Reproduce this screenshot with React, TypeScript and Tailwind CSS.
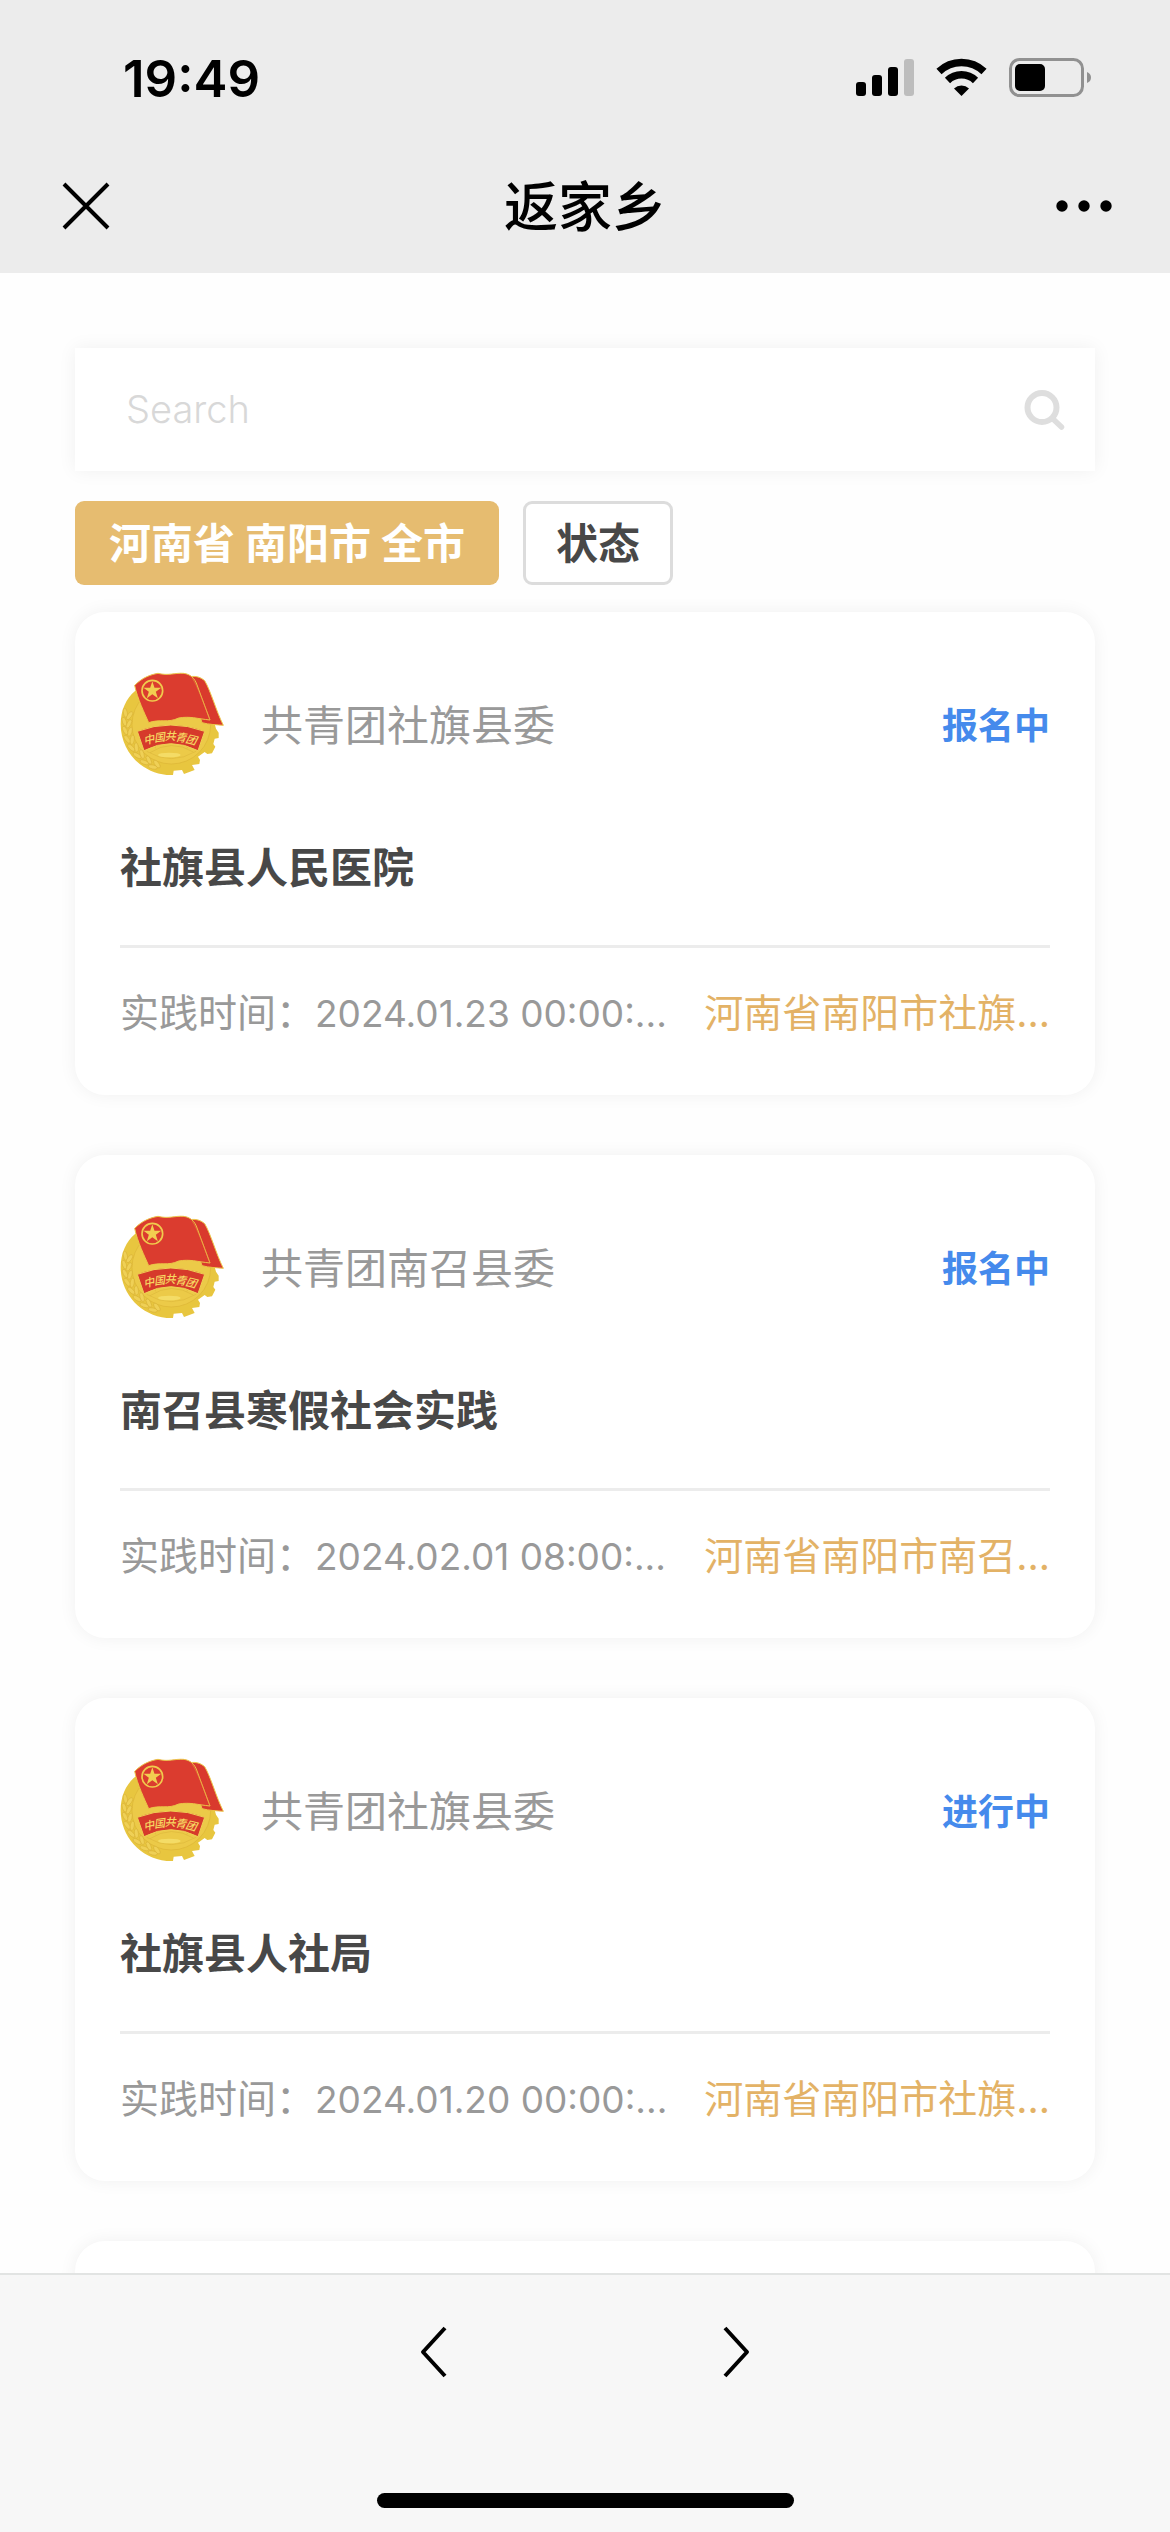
import { useState } from 'react'

interface Activity {
  org: string
  title: string
  status: string
  time: string
  place: string
}

const activities: Activity[] = [
  {
    org: '共青团社旗县委',
    title: '社旗县人民医院',
    status: '报名中',
    time: '2024.01.23 00:00:...',
    place: '河南省南阳市社旗...'
  },
  {
    org: '共青团南召县委',
    title: '南召县寒假社会实践',
    status: '报名中',
    time: '2024.02.01 08:00:...',
    place: '河南省南阳市南召...'
  },
  {
    org: '共青团社旗县委',
    title: '社旗县人社局',
    status: '进行中',
    time: '2024.01.20 00:00:...',
    place: '河南省南阳市社旗...'
  }
]

// characters on the ribbon, each with its own spot and tilt
const ribbonChars = [
  { char: '中', x: 146, y: 268, angle: -14 },
  { char: '国', x: 178, y: 261, angle: -7 },
  { char: '共', x: 211, y: 258, angle: 0 },
  { char: '青', x: 243, y: 261, angle: 7 },
  { char: '团', x: 275, y: 268, angle: 14 }
]

const grains = [
  { x: 79, y: 190, angle: 8 },
  { x: 76, y: 216, angle: 0 },
  { x: 78, y: 242, angle: -10 },
  { x: 84, y: 268, angle: -20 },
  { x: 96, y: 293, angle: -30 },
  { x: 113, y: 316, angle: -42 },
  { x: 134, y: 336, angle: -52 },
  { x: 159, y: 350, angle: -62 }
]

function Emblem() {
  return (
    <svg viewBox="60 68 312 312" className="h-[104px] w-[104px] shrink-0" aria-hidden="true">
      <path
        d="M106 124C78 146 62 184 62 224C62 304 120 368 200 377L219 377L221 364L246 362L252 374L284 362L276 347L298 344L300 332L294 322L314 308L322 314L336 312L346 292L340 284L344 268L356 266L356 250L348 238L344 224L300 130Z"
        fill="#e8c63f"
      />
      <circle cx="214" cy="226" r="118" fill="#ecca48" />
      <circle cx="214" cy="226" r="118" fill="none" stroke="#ddb537" strokeWidth="2" />
      {grains.map((g, i) => (
        <g key={i} transform={`translate(${g.x} ${g.y}) rotate(${g.angle})`} fill="#efd056" stroke="#d4ab31" strokeWidth="1.5">
          <ellipse cx="-3" cy="0" rx="6" ry="14" transform="rotate(-18)" />
          <ellipse cx="13" cy="2" rx="6" ry="14" transform="rotate(26)" />
        </g>
      ))}
      <g stroke="#d9b239" strokeWidth="1.5" fill="none">
        <path d="M150 310Q214 268 280 308" />
        <path d="M214 284V236M190 288L178 250M238 288L250 250M168 298L150 268M260 298L280 268" />
        <path d="M140 306Q214 350 288 306" />
      </g>
      <ellipse cx="208" cy="317" rx="34" ry="7" fill="#f4dc66" />
      <path
        d="M262 84C284 78 300 82 314 94C332 124 348 184 370 228C350 226 328 226 306 220Z"
        fill="#d93a2d"
        stroke="#ecc648"
        strokeWidth="3"
      />
      <path
        d="M104 108C128 84 152 76 174 72C204 80 226 70 250 72C272 74 284 88 290 104L330 212C290 208 270 200 236 206C204 222 180 208 146 220C134 192 112 148 104 108Z"
        fill="#db3c2f"
        stroke="#ecc648"
        strokeWidth="3"
        strokeLinejoin="round"
      />
      <path d="M276 86C292 108 312 164 330 212" fill="none" stroke="#e8913c" strokeWidth="1.5" />
      <circle cx="157" cy="124" r="31" fill="none" stroke="#f0cb4d" strokeWidth="5" />
      <path
        d="M157 96L163.500 115.100L183.600 115.300L167.500 127.400L173.500 146.700L157 135L140.500 146.700L146.500 127.400L130.400 115.300L150.500 115.100Z"
        fill="#f2ce50"
      />
      <path d="M112 246Q212 208 314 246L294 304Q212 262 132 304Z" fill="#d63a2b" stroke="#efcf55" strokeWidth="3" />
      {ribbonChars.map((c) => (
        <text
          key={c.char}
          transform={`translate(${c.x} ${c.y}) rotate(${c.angle})`}
          textAnchor="middle"
          dominantBaseline="central"
          fill="#f6d862"
          className="font-['Noto_Sans_CJK_SC',sans-serif] text-[33px] font-medium italic"
        >
          {c.char}
        </text>
      ))}
    </svg>
  )
}

function StatusBar() {
  return (
    <div className="flex h-[156px] items-center justify-between pr-[78px] pl-[123px]">
      <span className="font-['Inter',sans-serif] text-[51px] leading-none font-semibold">19:49</span>
      <svg viewBox="0 0 236 40" className="h-[40px] w-[236px]" aria-hidden="true">
        <rect x="0" y="24" width="10" height="14" rx="3" />
        <rect x="16" y="17" width="10" height="21" rx="3" />
        <rect x="32" y="9" width="10" height="29" rx="3" />
        <rect x="48" y="1" width="10" height="37" rx="3" fill="#bdbdbd" />
        <g fill="none" stroke="#000" strokeWidth="7.4">
          <path d="M83 13.5A32.5 32.5 0 0 1 128 13.5" />
          <path d="M91.500 22.500A20 20 0 0 1 119.500 22.500" />
        </g>
        <path d="M105.500 38L98 30.500A11 11 0 0 1 113 30.500Z" />
        <rect x="154.500" y="1.500" width="72" height="36" rx="9" fill="none" stroke="#919191" strokeWidth="3" />
        <rect x="159" y="6" width="30" height="27" rx="5" />
        <path d="M231 14Q235 15.500 235 19.500T231 25Z" fill="#919191" />
      </svg>
    </div>
  )
}

function NavBar() {
  return (
    <div className="flex h-[117px] items-start justify-between px-[50px] pt-[20px]">
      <button type="button" aria-label="关闭" className="flex h-[60px] w-[72px] items-center justify-center">
        <svg viewBox="0 0 48 48" className="h-[48px] w-[48px]" fill="none" stroke="#000" strokeWidth="4">
          <path d="M2 2L46 46M46 2L2 46" />
        </svg>
      </button>
      <h1 className="text-[54px] leading-[64px] font-medium">返家乡</h1>
      <button type="button" aria-label="更多" className="flex h-[60px] w-[72px] items-center justify-center">
        <svg viewBox="0 0 56 12" className="h-[12px] w-[56px]">
          <circle cx="6" cy="6" r="5.700" />
          <circle cx="28" cy="6" r="5.700" />
          <circle cx="50" cy="6" r="5.700" />
        </svg>
      </button>
    </div>
  )
}

function ActivityCard({ activity }: { activity: Activity }) {
  return (
    <article className="rounded-[30px] bg-white px-[45px] pt-[60px] pb-[52px] shadow-[0_0_18px_rgba(0,0,0,0.06)]">
      <div className="flex items-center">
        <Emblem />
        <span className="ml-[37px] flex-1 pt-[4px] text-[42px] leading-[60px] text-[#999]">{activity.org}</span>
        <span className="pt-[4px] text-[36px] leading-[60px] font-bold text-[#458aec]">{activity.status}</span>
      </div>
      <h2 className="mt-[62px] text-[42px] leading-[60px] font-bold text-[#484848]">{activity.title}</h2>
      <div className="mt-[47px] flex items-center justify-between border-t-3 border-[#ececec] pt-[35px] text-[39px] leading-[60px]">
        <p className="whitespace-nowrap text-[#999]">
          实践时间：<span className="font-['Inter',sans-serif] text-[37px] leading-none">{activity.time}</span>
        </p>
        <p className="whitespace-nowrap text-[#e3b266]">{activity.place}</p>
      </div>
    </article>
  )
}

export default function App() {
  const [keyword, setKeyword] = useState('')

  return (
    <div className="flex h-screen flex-col bg-[#fefefe] font-['Inter','Noto_Sans_CJK_SC',sans-serif] text-black">
      <header className="shrink-0 bg-[#ececec]">
        <StatusBar />
        <NavBar />
      </header>

      <main className="min-h-0 flex-1 overflow-y-auto px-[75px] pt-[75px] [scrollbar-width:none]">
        <form
          className="flex h-[123px] items-center bg-white pr-[30px] pl-[51px] shadow-[0_0_18px_rgba(0,0,0,0.06)]"
          onSubmit={(e) => e.preventDefault()}
        >
          <input
            type="text"
            aria-label="Search"
            placeholder="Search"
            value={keyword}
            onChange={(e) => setKeyword(e.target.value)}
            className="min-w-0 flex-1 text-[38px] font-light outline-none placeholder:text-[#d8d8d8]"
          />
          <button type="submit" aria-label="搜索">
            <svg viewBox="0 0 42 42" className="h-[42px] w-[42px]" fill="none" stroke="#dedede">
              <circle cx="19" cy="18.500" r="14.500" strokeWidth="6" />
              <path d="M29.500 29.500L38.500 38" strokeWidth="5.500" strokeLinecap="round" />
            </svg>
          </button>
        </form>

        <div className="mt-[30px] flex gap-[24px] text-[42px] leading-[60px] font-bold">
          <button type="button" className="h-[84px] rounded-[9px] bg-[#e6bc70] px-[34px] pt-[2px] text-white">
            河南省 南阳市 全市
          </button>
          <button type="button" className="h-[84px] rounded-[9px] border-3 border-[#dcdcdc] bg-white px-[30px] pt-[2px] text-[#484848]">
            状态
          </button>
        </div>

        <div className="mt-[27px] flex flex-col gap-[60px]">
          {activities.map((activity) => (
            <ActivityCard key={activity.title} activity={activity} />
          ))}
          <div className="h-[483px] rounded-[30px] bg-white shadow-[0_0_18px_rgba(0,0,0,0.06)]" />
        </div>
      </main>

      <footer className="relative z-10 shrink-0 border-t-2 border-[#e2e4e3] bg-[#f7f7f7] pt-[51px] pb-[24px]">
        <div className="flex justify-center gap-[276px]">
          <button type="button" aria-label="后退">
            <svg viewBox="0 0 27 52" className="h-[52px] w-[27px]" fill="none" stroke="#000" strokeWidth="4" strokeLinejoin="round">
              <path d="M25 2L3 26L25 50" />
            </svg>
          </button>
          <button type="button" aria-label="前进">
            <svg viewBox="0 0 27 52" className="h-[52px] w-[27px]" fill="none" stroke="#000" strokeWidth="4" strokeLinejoin="round">
              <path d="M2 2L24 26L2 50" />
            </svg>
          </button>
        </div>
        <div className="mx-auto mt-[115px] h-[15px] w-[417px] rounded-full bg-black" />
      </footer>
    </div>
  )
}
